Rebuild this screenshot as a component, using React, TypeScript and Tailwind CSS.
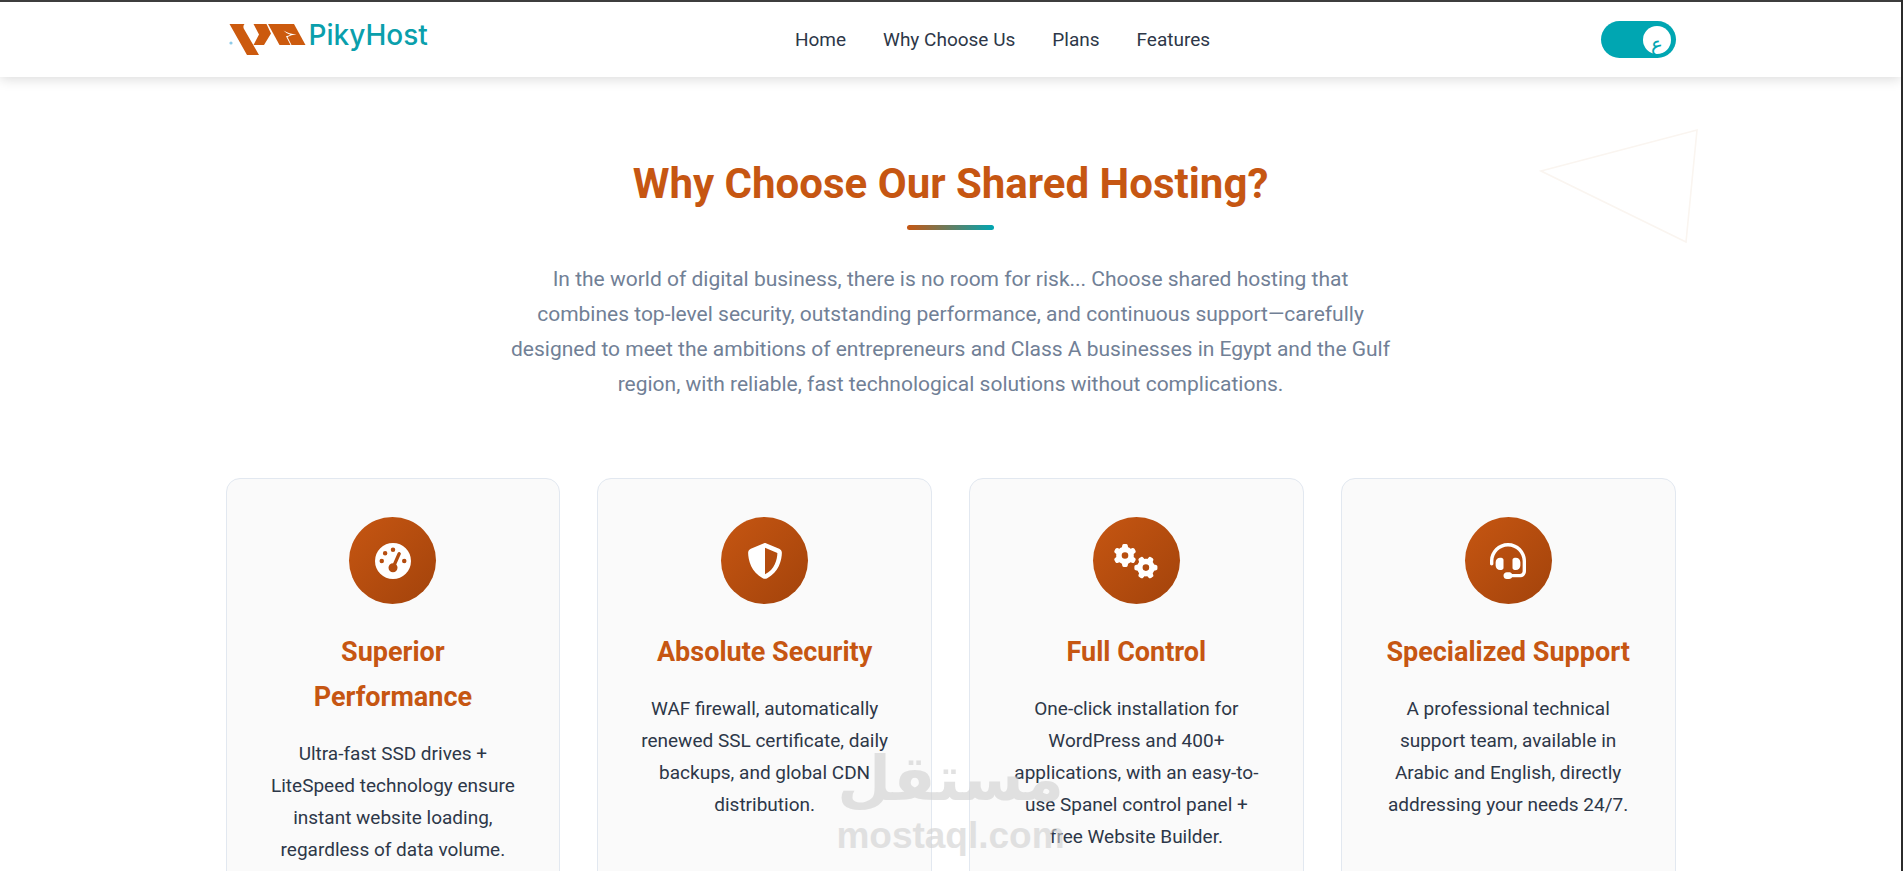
import type { IconType } from 'react-icons';
import { FaGaugeHigh, FaGears, FaHeadset, FaShieldHalved } from 'react-icons/fa6';

const links = [
  { label: 'Home', href: '#home' },
  { label: 'Why Choose Us', href: '#why' },
  { label: 'Plans', href: '#plans' },
  { label: 'Features', href: '#features' },
];

const features: { title: string; text: string; Icon: IconType; iconSize: string }[] = [
  {
    title: 'Superior Performance',
    text: 'Ultra-fast SSD drives + LiteSpeed technology ensure instant website loading, regardless of data volume.',
    Icon: FaGaugeHigh,
    iconSize: 'size-9',
  },
  {
    title: 'Absolute Security',
    text: 'WAF firewall, automatically renewed SSL certificate, daily backups, and global CDN distribution.',
    Icon: FaShieldHalved,
    iconSize: 'size-9',
  },
  {
    title: 'Full Control',
    text: 'One-click installation for WordPress and 400+ applications, with an easy-to-use Spanel control panel + free Website Builder.',
    Icon: FaGears,
    iconSize: 'size-11',
  },
  {
    title: 'Specialized Support',
    text: 'A professional technical support team, available in Arabic and English, directly addressing your needs 24/7.',
    Icon: FaHeadset,
    iconSize: 'size-9',
  },
];

function Logo() {
  return (
    <a href="#home" className="flex items-start pl-[3px]" aria-label="PikyHost">
      <svg width="77" height="32" viewBox="0 0 77 32" className="mt-[22px]" aria-hidden="true">
        <circle cx="2" cy="19" r="1.6" fill="#8fcbe8" />
        <g fill="#cc5a0e">
          <path d="M.5 0H15.5Q13.6 2 15 5L30 31H18Z" />
          <path d="M24.5 0H37.5L42 9.5 35 21H24.5L30 10.5Z" />
          <path d="M39 0H65L76.5 21H50.5Z" />
        </g>
        <path d="M54.5 6.5Q60 10 67.5 10.3Q62 11 58.5 13L62.5 21H61.5L57 12.2Q60.5 11.5 61.5 10.7Q57 9.5 54.5 6.5Z" fill="#fff" />
      </svg>
      <span className="ml-[3px] mt-[15px] font-[Inter,sans-serif] text-[28px] font-medium leading-9 text-[#0a9fac]">
        PikyHost
      </span>
    </a>
  );
}

function Header() {
  return (
    <header className="relative z-10 border-t-2 border-[#3d3d3d] bg-white shadow-[0_2px_12px_rgba(0,0,0,0.15)]">
      <div className="mx-auto grid h-[75px] max-w-[1450px] grid-cols-[1fr_auto_1fr]">
        <div className="flex">
          <Logo />
        </div>
        <nav className="flex items-center gap-[37px] pl-[104px] pt-0.5 text-[19px] text-[#2d3748]">
          {links.map((l) => (
            <a key={l.label} href={l.href}>
              {l.label}
            </a>
          ))}
        </nav>
        <div className="flex items-center justify-end">
          <button
            type="button"
            aria-label="Switch to Arabic"
            className="flex h-[37px] w-[75px] items-center justify-end rounded-full bg-[#00a6b2] pr-[5px]"
          >
            <span className="flex size-7 justify-center rounded-full bg-white pt-1 text-[20px] font-medium leading-7 text-[#00a6b2]">
              ع
            </span>
          </button>
        </div>
      </div>
    </header>
  );
}

function Watermark() {
  return (
    <div className="pointer-events-none absolute left-1/2 top-[738px] z-20 flex -translate-x-1/2 flex-col items-center font-bold text-[#d0d0d0] opacity-60">
      <span dir="rtl" className="font-['DejaVu_Sans',sans-serif] text-[62px] leading-[82px]">
        مستقل
      </span>
      <span className="font-['Liberation_Sans',sans-serif] text-[37px] leading-8">mostaql.com</span>
    </div>
  );
}

export default function App() {
  return (
    <div className="relative h-screen overflow-hidden border-r-2 border-[#2b2b2b] bg-white font-[Roboto,sans-serif]">
      <Header />
      <svg
        width="160"
        height="116"
        viewBox="0 0 160 116"
        className="absolute right-[202px] top-[128px]"
        aria-hidden="true"
      >
        <path d="M2 43L158 2 147 114Z" fill="none" stroke="#faf5f0" strokeWidth="1.6" />
      </svg>
      <main className="mx-auto max-w-[1450px] pt-[76px] text-center">
        <h1 className="text-[42px] font-bold leading-[62px] text-[#c65612]">Why Choose Our Shared Hosting?</h1>
        <div className="mx-auto mt-[10px] h-[5px] w-[87px] rounded-sm bg-linear-to-r/srgb from-[#c65612] to-[#00a6b2]" />
        <p className="mx-auto mt-8 max-w-[886px] text-[21px] leading-[35px] text-[#718096]">
          In the world of digital business, there is no room for risk... Choose shared hosting that combines top-level
          security, outstanding performance, and continuous support—carefully designed to meet the ambitions of
          entrepreneurs and Class A businesses in Egypt and the Gulf region, with reliable, fast technological solutions
          without complications.
        </p>
        <div className="mt-[76px] grid grid-cols-4 gap-[37px]">
          {features.map(({ title, text, Icon, iconSize }) => (
            <article key={title} className="rounded-[14px] border border-[#e2e8f0] bg-[#fafafa] px-[38px] pb-12 pt-[38px]">
              <div className="mx-auto flex size-[87px] items-center justify-center rounded-full bg-linear-to-br from-[#c65612] to-[#a3430b] text-white">
                <Icon className={iconSize} aria-hidden="true" />
              </div>
              <h2 className="mt-[26px] text-[27px] font-bold leading-[45px] text-[#c65612]">{title}</h2>
              <p className="mt-[18px] text-[19px] leading-8 text-[#2d3748]">{text}</p>
            </article>
          ))}
        </div>
      </main>
      <Watermark />
    </div>
  );
}
